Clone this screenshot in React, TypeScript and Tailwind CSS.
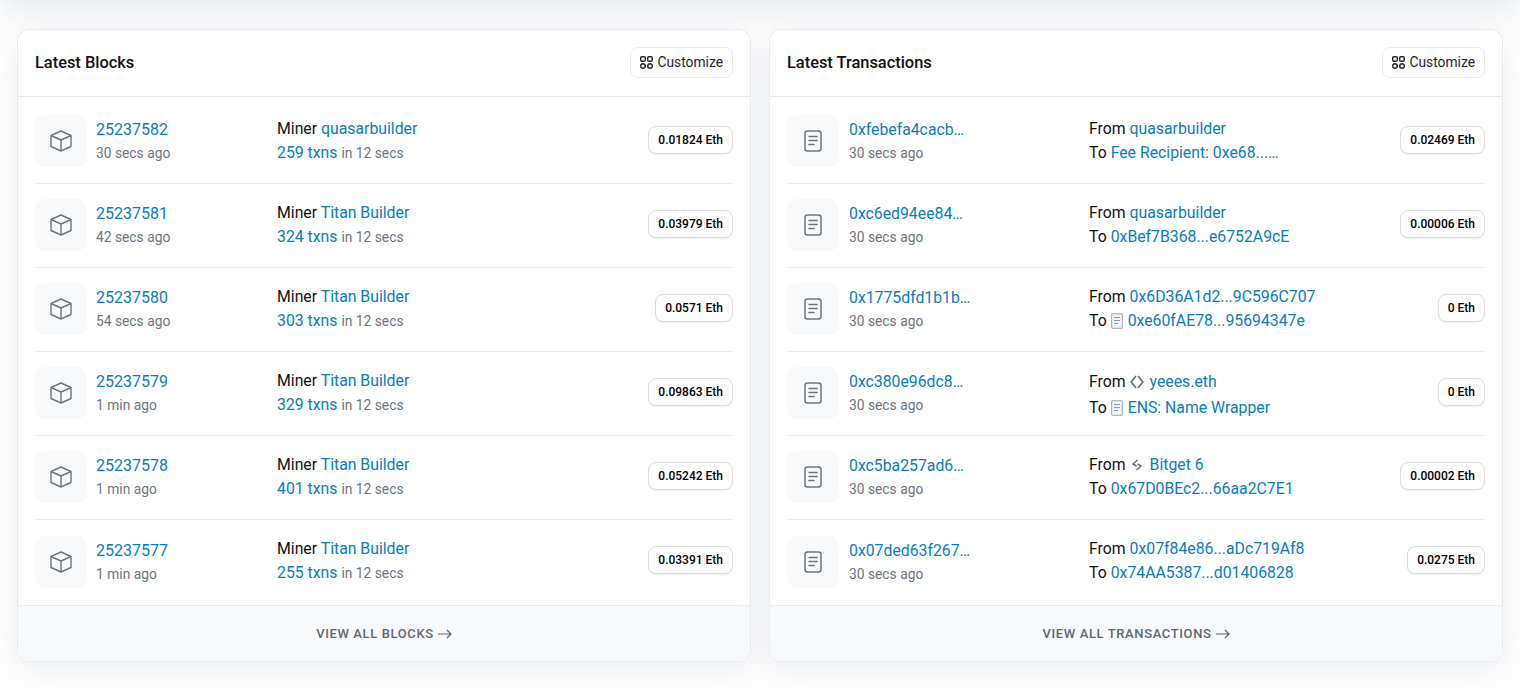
const blocks = [
  { id: "25237582", age: "30 secs ago", miner: "quasarbuilder", txns: "259 txns", eth: "0.01824 Eth" },
  { id: "25237581", age: "42 secs ago", miner: "Titan Builder", txns: "324 txns", eth: "0.03979 Eth" },
  { id: "25237580", age: "54 secs ago", miner: "Titan Builder", txns: "303 txns", eth: "0.0571 Eth" },
  { id: "25237579", age: "1 min ago", miner: "Titan Builder", txns: "329 txns", eth: "0.09863 Eth" },
  { id: "25237578", age: "1 min ago", miner: "Titan Builder", txns: "401 txns", eth: "0.05242 Eth" },
  { id: "25237577", age: "1 min ago", miner: "Titan Builder", txns: "255 txns", eth: "0.03391 Eth" },
];

type Mark = "doc" | "ens" | "swap" | undefined;

const txs: { hash: string; from: string; fromMark?: Mark; to: string; toMark?: Mark; eth: string }[] = [
  { hash: "0xfebefa4cacb…", from: "quasarbuilder", to: "Fee Recipient: 0xe68...…", eth: "0.02469 Eth" },
  { hash: "0xc6ed94ee84…", from: "quasarbuilder", to: "0xBef7B368...e6752A9cE", eth: "0.00006 Eth" },
  { hash: "0x1775dfd1b1b…", from: "0x6D36A1d2...9C596C707", to: "0xe60fAE78...95694347e", toMark: "doc", eth: "0 Eth" },
  { hash: "0xc380e96dc8…", from: "yeees.eth", fromMark: "ens", to: "ENS: Name Wrapper", toMark: "doc", eth: "0 Eth" },
  { hash: "0xc5ba257ad6…", from: "Bitget 6", fromMark: "swap", to: "0x67D0BEc2...66aa2C7E1", eth: "0.00002 Eth" },
  { hash: "0x07ded63f267…", from: "0x07f84e86...aDc719Af8", to: "0x74AA5387...d01406828", eth: "0.0275 Eth" },
];

const CubeIcon = () => (
  <svg width="22" height="22" viewBox="0 0 22 22" fill="none" stroke="#6c757d" strokeWidth="1.4" strokeLinejoin="round">
    <path d="M11 1 21 5.5v11L11 21 1 16.500V5.500L11 1Z" />
    <path d="M1 5.500 11 10l10-4.500M11 10v11" />
  </svg>
);

const DocIcon = () => (
  <svg width="18" height="22" viewBox="0 0 18 22" fill="none" stroke="#6c757d" strokeWidth="1.5" strokeLinecap="round">
    <rect x="1" y="1" width="16" height="20" rx="2.5" />
    <path d="M5 6.500h8M5 10.500h8M5 14.500h5" />
  </svg>
);

const SmallDoc = () => (
  <svg width="12" height="16" viewBox="0 0 12 16" fill="#f1f3f5" stroke="#adb5bd" strokeWidth="1.2" className="mr-px shrink-0">
    <rect x="0.6" y="0.6" width="10.8" height="14.8" rx="1.5" />
    <path d="M3 4.500h6M3 7.500h6M3 10.500h4" stroke="#8c98a4" />
  </svg>
);

const EnsIcon = () => (
  <svg width="14" height="14" viewBox="0 0 14 14" fill="none" stroke="#6c757d" strokeWidth="1.8" className="shrink-0">
    <path d="M6 1 1.200 7 6 13M8 1l4.800 6L8 13" />
  </svg>
);

const SwapIcon = () => (
  <svg width="12" height="12" viewBox="0 0 12 12" fill="none" stroke="#6c757d" strokeWidth="1.5" className="mx-px shrink-0">
    <path d="M6.500 1 2 5l3.500 2M5.500 11 10 7 6.500 5" />
  </svg>
);

const GridIcon = () => (
  <svg width="13" height="13" viewBox="0 0 13 13" fill="none" stroke="#212529" strokeWidth="1.4">
    <rect x="0.7" y="0.7" width="4.6" height="4.6" rx="1.2" />
    <rect x="7.7" y="0.7" width="4.6" height="4.6" rx="1.2" />
    <circle cx="3" cy="10" r="2.3" />
    <circle cx="10" cy="10" r="2.3" />
  </svg>
);

const ArrowIcon = () => (
  <svg width="14" height="10" viewBox="0 0 14 10" fill="none" stroke="#5c646c" strokeWidth="1.2">
    <path d="M0 5h13M9 1l4 4-4 4" />
  </svg>
);

const markFor = (m: Mark) => {
  if (m === "doc") return <SmallDoc />;
  if (m === "ens") return <EnsIcon />;
  if (m === "swap") return <SwapIcon />;
  return null;
};

const Card = ({ title, footer, children }: { title: string; footer: string; children: React.ReactNode }) => (
  <div className="flex h-[633px] flex-1 flex-col overflow-hidden rounded-[12px] border border-[#e9ecef] bg-white shadow-[0_8px_32px_rgba(189,197,209,0.3)]">
    <div className="flex h-[67px] shrink-0 items-center justify-between border-b border-[#e9ecef] px-[17px]">
      <h2 className="text-[16.4px] font-medium text-[#111]">{title}</h2>
      <button className="mb-[2px] flex h-[31px] items-center gap-[5px] rounded-lg border border-[#e9ecef] bg-white px-[9px] text-[13.8px] text-[#212529]">
        <GridIcon />
        Customize
      </button>
    </div>
    <div className="flex-1 px-[17px] pt-[3px]">{children}</div>
    <div className="flex h-[56px] shrink-0 items-center justify-center gap-[4px] border-t border-[#e9ecef] bg-[#f8f9fa] text-[13px] font-medium tracking-[0.62px] text-[#5f676f]">
      {footer}
      <ArrowIcon />
    </div>
  </div>
);

const Badge = ({ children }: { children: string }) => (
  <span className="mb-[4px] rounded-lg border border-[#dadee3] bg-white px-[9px] py-[5px] text-xs leading-[16px] font-medium text-[#000] shadow-[0_1px_1px_rgba(0,0,0,0.06)]">
    {children}
  </span>
);

const Row = ({ icon, last, children }: { icon: React.ReactNode; last: boolean; children: React.ReactNode }) => (
  <div className={last ? "flex h-[84px] items-center" : "flex h-[84px] items-center border-b border-[#e9ecef]"}>
    <div className="mb-px flex size-[52px] shrink-0 items-center justify-center rounded-[10px] bg-[#f8f9fa]">{icon}</div>
    {children}
  </div>
);

export default function App() {
  return (
    <div className="h-[692px] w-[1520px] overflow-hidden bg-white font-['Roboto',sans-serif] text-[#111]">
      <div className="-mt-[40px] h-[40px] shadow-[0_8px_32px_rgba(189,197,209,0.45)]" />
      <div className="flex gap-[18px] px-[17px] pt-[29px]">
        <Card title="Latest Blocks" footer="VIEW ALL BLOCKS">
          {blocks.map((b, i) => (
            <Row key={b.id} icon={<CubeIcon />} last={i === blocks.length - 1}>
              <div className="w-[190px] pl-[9px]">
                <a className="block text-base leading-6 text-[#0a7cbf]">{b.id}</a>
                <div className="text-[13.8px] leading-[23px] text-[#6c757d]">{b.age}</div>
              </div>
              <div className="flex-1 -translate-y-px">
                <div className="text-[15.8px] leading-6">
                  Miner <a className="text-[#0a7cbf]">{b.miner}</a>
                </div>
                <div className="leading-6">
                  <a className="text-[15.8px] text-[#0a7cbf]">{b.txns}</a>{" "}
                  <span className="text-[13.8px] text-[#6c757d]">in 12 secs</span>
                </div>
              </div>
              <Badge>{b.eth}</Badge>
            </Row>
          ))}
        </Card>
        <Card title="Latest Transactions" footer="VIEW ALL TRANSACTIONS">
          {txs.map((t, i) => (
            <Row key={t.hash} icon={<DocIcon />} last={i === txs.length - 1}>
              <div className="w-[250px] pl-[10px]">
                <a className="block text-[15.8px] leading-6 text-[#0a7cbf]">{t.hash}</a>
                <div className="text-[13.8px] leading-[23px] text-[#6c757d]">30 secs ago</div>
              </div>
              <div className={t.fromMark === "ens" ? "flex-1 -translate-y-px pt-[4px]" : "flex-1 -translate-y-px"}>
                <div className={t.fromMark === "ens" ? "mb-[2px] flex items-center gap-[4px] text-[15.8px] leading-6" : "flex items-center gap-[4px] text-[15.8px] leading-6"}>
                  From {markFor(t.fromMark)}
                  <a className={t.fromMark ? "ml-[2px] text-[#0a7cbf]" : "text-[#0a7cbf]"}>{t.from}</a>
                </div>
                <div className="flex items-center gap-[4px] text-[15.8px] leading-6">
                  To {markFor(t.toMark)}
                  <a className="text-[#0a7cbf]">{t.to}</a>
                </div>
              </div>
              <Badge>{t.eth}</Badge>
            </Row>
          ))}
        </Card>
      </div>
    </div>
  );
}
